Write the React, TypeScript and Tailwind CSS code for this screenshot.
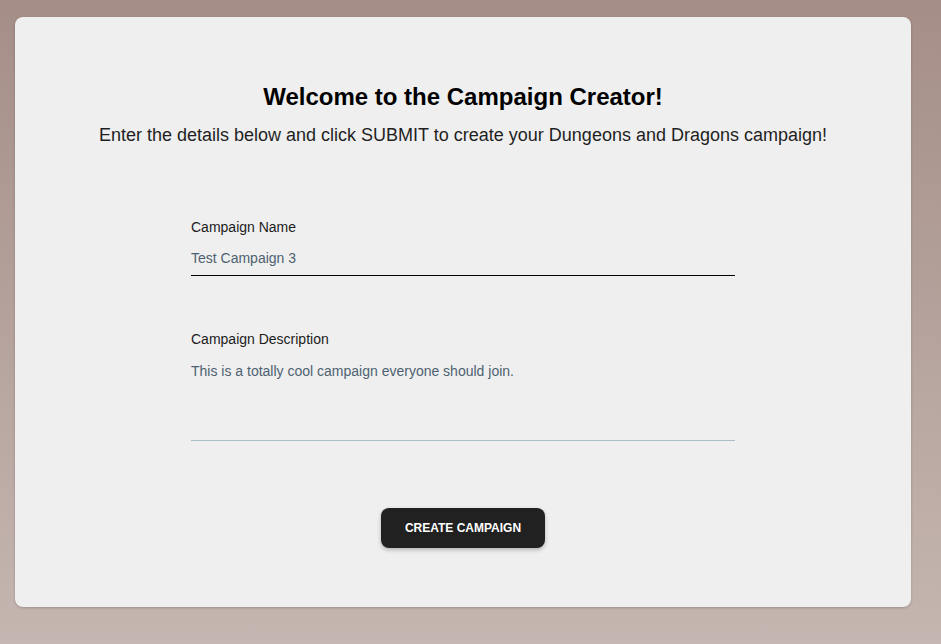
export default function App() {
  return (
    <div className="min-h-[644px] w-full bg-gradient-to-b from-[#a58e87] to-[#c5b6b1] px-[15px] pt-[17px] pb-[37px] font-['Liberation_Sans',Arial,sans-serif]">
      <div className="h-[590px] w-[896px] rounded-lg bg-[#efefef] pt-[64px] shadow-[0_1px_3px_rgba(0,0,0,0.2)]">
        <h1 className="text-center text-[24px] leading-[32px] font-bold text-black">
          Welcome to the Campaign Creator!
        </h1>
        <p className="mt-2 text-center text-[18px] leading-[28px] text-[#1f1f1f]">
          Enter the details below and click SUBMIT to create your Dungeons and Dragons campaign!
        </p>

        <div className="mx-auto mt-[68px] w-[544px]">
          <div className="text-[14px] leading-[20px] text-[#1c1c1c]">Campaign Name</div>
          <div className="mt-[11px] border-b border-black pb-[7px] text-[14px] leading-[20px] text-[#4d6270]">
            Test Campaign 3
          </div>

          <div className="mt-[53px] text-[14px] leading-[20px] text-[#1c1c1c]">Campaign Description</div>
          <div className="mt-[12px] h-[80px] border-b border-[#abbfca] text-[14px] leading-[20px] text-[#4d6270]">
            This is a totally cool campaign everyone should join.
          </div>
        </div>

        <div className="mt-[67px] flex justify-center">
          <button className="h-[40px] w-[164px] rounded-lg bg-[#212121] text-[12px] font-bold text-white uppercase shadow-[0_2px_4px_rgba(0,0,0,0.25)]">
            Create Campaign
          </button>
        </div>
      </div>
    </div>
  );
}
